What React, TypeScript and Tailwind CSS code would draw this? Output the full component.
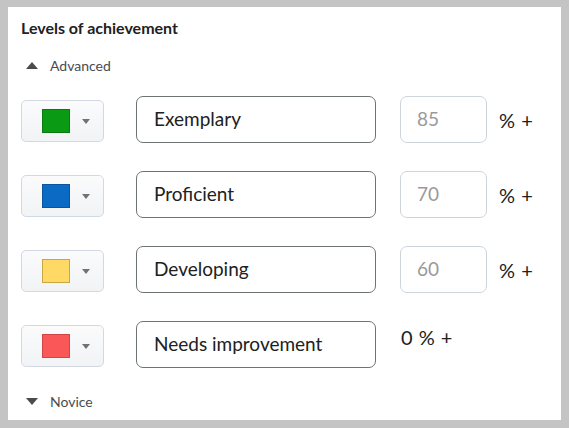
import React from "react";

const rows = [
  { color: "#0a9a14", border: "#0a7a10", name: "Exemplary", pct: "85" },
  { color: "#0a6ac4", border: "#0a55a0", name: "Proficient", pct: "70" },
  { color: "#ffd966", border: "#c9a840", name: "Developing", pct: "60" },
  { color: "#fa5758", border: "#d04545", name: "Needs improvement", pct: null as string | null },
];

function Caret({ up }: { up?: boolean }) {
  return (
    <svg width="12" height="7" viewBox="0 0 12 7" className="block">
      {up ? <path d="M0 7 L6 0 L12 7 Z" fill="#494c4e" /> : <path d="M0 0 L12 0 L6 7 Z" fill="#494c4e" />}
    </svg>
  );
}

export default function App() {
  return (
    <div
      className="w-[569px] h-[428px] bg-[#c4c4c4] pt-[7px] pl-[8px] overflow-hidden"
      style={{ fontFamily: "Lato, 'Open Sans', sans-serif" }}
    >
      <div className="w-[553px] h-[413px] bg-white pl-[13px] pt-[11px] text-[#202122]">
        <div className="text-[16px] font-bold leading-[20px]">Levels of achievement</div>
        <div className="flex items-center mt-[17px] h-[20px]">
          <div className="ml-[5px] mr-[12px]"><Caret up /></div>
          <span className="text-[14px] text-[#494c4e]">Advanced</span>
        </div>
        <div className="mt-[21px] flex flex-col gap-[28px]">
          {rows.map((r) => (
            <div key={r.name} className="flex items-start h-[47px]">
              <div className="mt-[4px] w-[83px] h-[42px] rounded-[5px] border border-[#d3d9e3] bg-gradient-to-b from-[#fbfbfc] to-[#f1f3f5] flex items-center pl-[20px]">
                <div
                  className="w-[28px] h-[24px] border"
                  style={{ backgroundColor: r.color, borderColor: r.border }}
                />
                <svg width="8" height="5" viewBox="0 0 8 5" className="ml-[12px]">
                  <path d="M0 0 L8 0 L4 5 Z" fill="#6e7376" />
                </svg>
              </div>
              <div className="ml-[32px] w-[240px] h-[47px] rounded-[7px] border border-[#6e7376] flex items-center pl-[17px] text-[19px]">
                {r.name}
              </div>
              {r.pct !== null ? (
                <>
                  <div className="ml-[24px] w-[87px] h-[47px] rounded-[7px] border border-[#cdd5dc] flex items-center pl-[16px] text-[19px] text-[#9a9a9a]">
                    {r.pct}
                  </div>
                  <div className="ml-[12px] h-[47px] flex items-center text-[20px] tracking-[0.5px]">%&nbsp;+</div>
                </>
              ) : (
                <div className="ml-[25px] mt-[1px] h-[30px] flex items-center text-[20px] tracking-[0.5px]">0 %&nbsp;+</div>
              )}
            </div>
          ))}
        </div>
        <div className="flex items-center mt-[23px] h-[20px]">
          <div className="ml-[5px] mr-[12px]"><Caret /></div>
          <span className="text-[14px] text-[#494c4e]">Novice</span>
        </div>
      </div>
    </div>
  );
}
